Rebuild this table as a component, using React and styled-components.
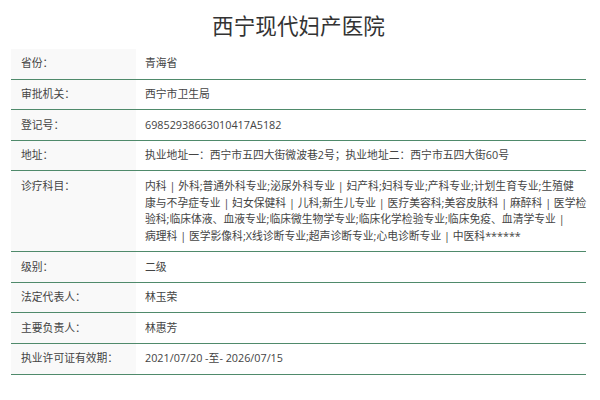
import React from "react";
import styled, { createGlobalStyle } from "styled-components";

const Global = createGlobalStyle`
  html, body { margin: 0; padding: 0; background: #fff; }
  body { font-family: "Open Sans", "Noto Sans CJK SC", sans-serif; color: #333; }
`;

const Page = styled.div`
  width: 575px;
  padding: 0 14px 0 11px;
`;

const Title = styled.h1`
  margin: 0;
  padding-top: 9px;
  height: 40px;
  font-size: 21.6px;
  font-weight: normal;
  line-height: 32px;
  text-align: center;
  color: #333;
  font-family: "Noto Sans CJK SC", sans-serif;
`;

const Table = styled.table`
  width: 575px;
  border-collapse: collapse;
  table-layout: fixed;
  font-size: 10.8px;
`;

const Row = styled.tr`
  border-bottom: 1px solid #4f8a6b;
`;

const Label = styled.td`
  width: 125px;
  box-sizing: border-box;
  background: #f9f9f9;
  padding: 6.4px 10px;
  line-height: 16.8px;
  color: #444;
  white-space: nowrap;
  vertical-align: top;
`;

const Value = styled.td`
  padding: 6.4px 8px 6.4px 9px;
  line-height: 16.8px;
  color: #444;
  vertical-align: top;
`;

const Line = styled.span`
  display: block;
  white-space: nowrap;
`;

const subjectLines = [
  "内科 | 外科;普通外科专业;泌尿外科专业 | 妇产科;妇科专业;产科专业;计划生育专业;生殖健",
  "康与不孕症专业 | 妇女保健科 | 儿科;新生儿专业 | 医疗美容科;美容皮肤科 | 麻醉科 | 医学检",
  "验科;临床体液、血液专业;临床微生物学专业;临床化学检验专业;临床免疫、血清学专业 |",
  "病理科 | 医学影像科;X线诊断专业;超声诊断专业;心电诊断专业 | 中医科******",
];

const rows = [
  ["省份：", "青海省"],
  ["审批机关：", "西宁市卫生局"],
  ["登记号：", "69852938663010417A5182"],
  ["地址：", "执业地址一：西宁市五四大街微波巷2号；执业地址二：西宁市五四大街60号"],
  ["诊疗科目：", subjectLines],
  ["级别：", "二级"],
  ["法定代表人：", "林玉荣"],
  ["主要负责人：", "林惠芳"],
  ["执业许可证有效期：", "2021/07/20 -至- 2026/07/15"],
];

export default function App() {
  return (
    <Page>
      <Global />
      <Title>西宁现代妇产医院</Title>
      <Table>
        <tbody>
          {rows.map(([k, v]) => (
            <Row key={k}>
              <Label>{k}</Label>
              <Value>
                {Array.isArray(v) ? v.map((l) => <Line key={l}>{l}</Line>) : v}
              </Value>
            </Row>
          ))}
        </tbody>
      </Table>
    </Page>
  );
}
